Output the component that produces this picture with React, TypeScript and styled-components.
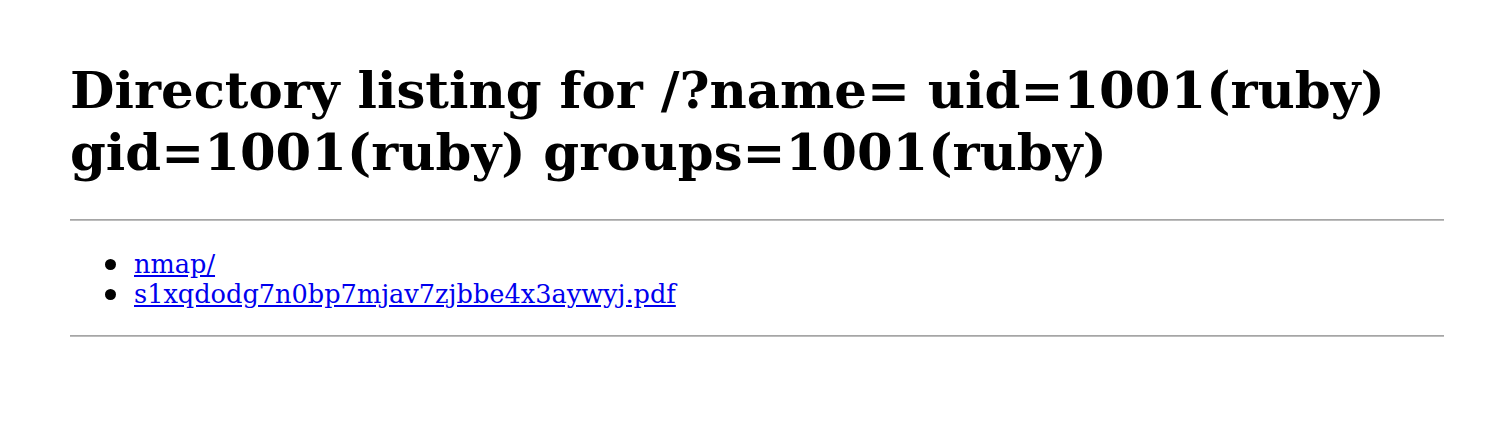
import React from "react";
import styled, { createGlobalStyle } from "styled-components";

const Global = createGlobalStyle`
  html, body { margin: 0; padding: 0; background: #fff; }
  body { font-family: "DejaVu Serif", serif; font-size: 25.6px; color: #000; }
`;

const Page = styled.div`
  padding: 24px 68px 0 70px;
`;

const Title = styled.h1`
  font-size: 51.3px;
  font-weight: bold;
  line-height: 62px;
  margin: 35px 0 36px 0;
`;

const Rule = styled.hr`
  border: 0;
  height: 2px;
  margin: 0;
  background: linear-gradient(#9a9a9a, #c8c8c8);
`;

const List = styled.ul`
  list-style: none;
  margin: 28px 0 26px;
  padding-left: 64px;
  line-height: 30px;
`;

const Item = styled.li`
  position: relative;
  &::before {
    content: "";
    position: absolute;
    left: -29px;
    top: 10px;
    width: 11px;
    height: 11px;
    border-radius: 50%;
    background: #000;
  }
`;

const FileLink = styled.a`
  color: #0000ee;
  text-decoration: underline;
`;

export default function App() {
  const files = ["nmap/", "s1xqdodg7n0bp7mjav7zjbbe4x3aywyj.pdf"];
  return (
    <>
      <Global />
      <Page>
        <Title>Directory listing for /?name= uid=1001(ruby) gid=1001(ruby) groups=1001(ruby)</Title>
        <Rule />
        <List>
          {files.map((f) => (
            <Item key={f}>
              <FileLink href="#">{f}</FileLink>
            </Item>
          ))}
        </List>
        <Rule />
      </Page>
    </>
  );
}
